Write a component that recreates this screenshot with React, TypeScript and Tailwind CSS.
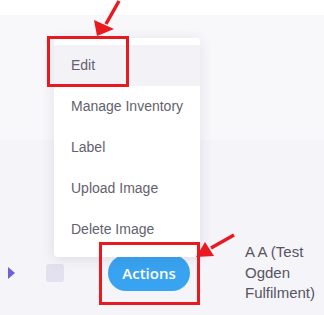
const items = ["Edit", "Manage Inventory", "Label", "Upload Image", "Delete Image"];

export default function App() {
  return (
    <div className="relative h-[315px] w-[324px] overflow-hidden bg-[#f5f4f9] font-['Liberation_Sans',Arial,sans-serif]">
      <div className="h-[15px] bg-white" />
      <div className="h-[125px] bg-[#f8f8fb]" />

      {/* table row */}
      <div className="flex items-center pl-[8px] pt-[102px]">
        <span className="h-0 w-0 border-y-[6px] border-l-[7px] border-y-transparent border-l-[#6a62d6]" />
        <span className="ml-[31px] h-[18px] w-[18px] rounded-[3px] bg-[#e3e1ef]" />
        <button className="ml-[44px] flex h-[36px] w-[82px] items-center justify-center rounded-full bg-[#38a3f1] font-['Open_Sans',sans-serif] text-[15px] font-semibold text-white">
          Actions
        </button>
        <div className="ml-[55px] text-[15px] leading-[20.5px] text-[#555560]">
          A A (Test
          <br />
          Ogden
          <br />
          Fulfilment)
        </div>
      </div>

      {/* dropdown menu */}
      <div className="absolute left-[54px] top-[38px] w-[146px] rounded-[4px] bg-white py-[7px] shadow-[0_2px_14px_rgba(60,60,90,0.12)]">
        {items.map((it, i) => (
          <div
            key={it}
            className={`flex h-[41px] items-center pl-[17px] text-[14px] text-[#62626e] ${i === 0 ? "bg-[#f3f3f7]" : ""}`}
          >
            {it}
          </div>
        ))}
      </div>

      {/* annotations */}
      <div className="absolute left-[47px] top-[36px] h-[51px] w-[82px] border-[3px] border-[#e8191f]" />
      <div className="absolute left-[99px] top-[242px] h-[63px] w-[101px] border-[3px] border-[#e8191f]" />
      <svg className="absolute left-0 top-0" width="324" height="315" viewBox="0 0 324 315">
        <line x1="119" y1="1" x2="106" y2="24" stroke="#e8191f" strokeWidth="3.5" />
        <polygon points="97,36 94,20 114,29" fill="#e8191f" />
        <line x1="234" y1="235" x2="211" y2="248" stroke="#e8191f" strokeWidth="3.5" />
        <polygon points="196,257 205,242 214,256" fill="#e8191f" />
      </svg>
    </div>
  );
}
